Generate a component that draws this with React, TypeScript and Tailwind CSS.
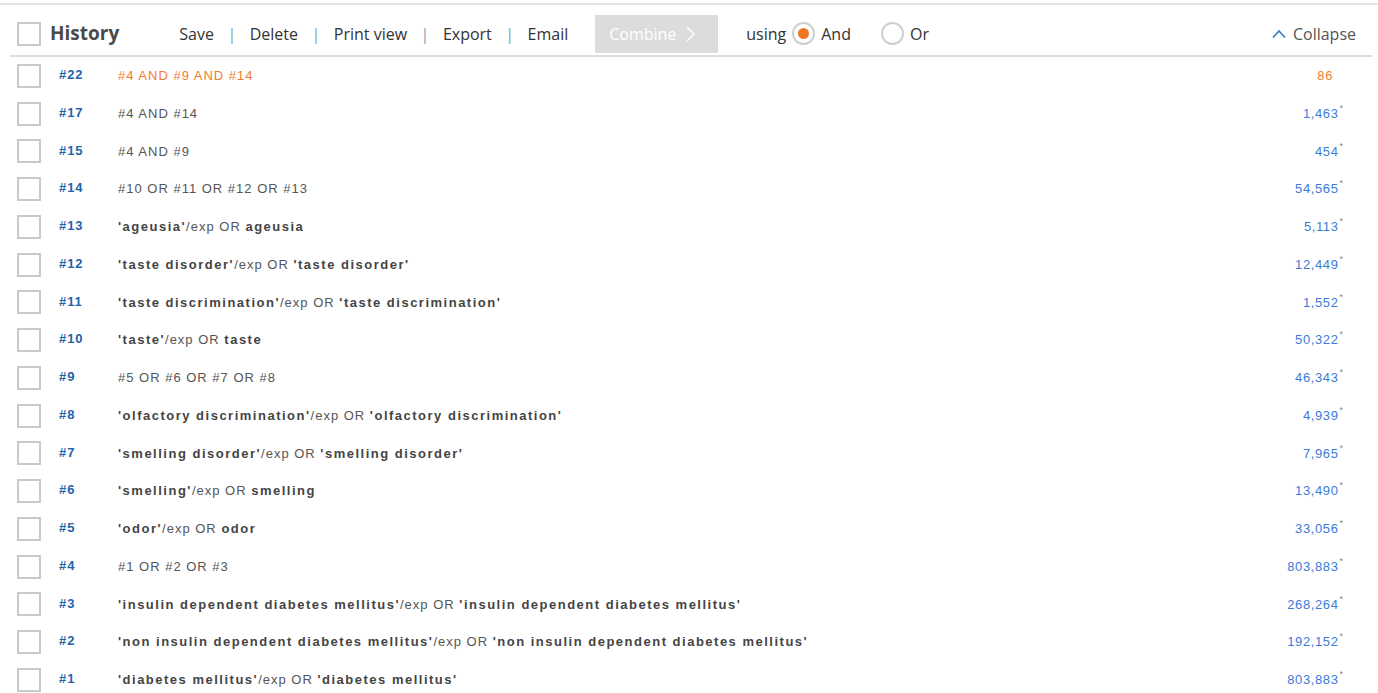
import React from 'react';

type Part = { text: string; bold?: boolean };

type HistoryRow = {
  id: number;
  query: Part[];
  count: string;
  latest?: boolean;
};

const t = (text: string): Part => ({ text });
const b = (text: string): Part => ({ text, bold: true });

const rows: HistoryRow[] = [
  { id: 22, query: [t('#4 AND #9 AND #14')], count: '86', latest: true },
  { id: 17, query: [t('#4 AND #14')], count: '1,463' },
  { id: 15, query: [t('#4 AND #9')], count: '454' },
  { id: 14, query: [t('#10 OR #11 OR #12 OR #13')], count: '54,565' },
  { id: 13, query: [b("'ageusia'"), t('/exp OR '), b('ageusia')], count: '5,113' },
  { id: 12, query: [b("'taste disorder'"), t('/exp OR '), b("'taste disorder'")], count: '12,449' },
  { id: 11, query: [b("'taste discrimination'"), t('/exp OR '), b("'taste discrimination'")], count: '1,552' },
  { id: 10, query: [b("'taste'"), t('/exp OR '), b('taste')], count: '50,322' },
  { id: 9, query: [t('#5 OR #6 OR #7 OR #8')], count: '46,343' },
  { id: 8, query: [b("'olfactory discrimination'"), t('/exp OR '), b("'olfactory discrimination'")], count: '4,939' },
  { id: 7, query: [b("'smelling disorder'"), t('/exp OR '), b("'smelling disorder'")], count: '7,965' },
  { id: 6, query: [b("'smelling'"), t('/exp OR '), b('smelling')], count: '13,490' },
  { id: 5, query: [b("'odor'"), t('/exp OR '), b('odor')], count: '33,056' },
  { id: 4, query: [t('#1 OR #2 OR #3')], count: '803,883' },
  { id: 3, query: [b("'insulin dependent diabetes mellitus'"), t('/exp OR '), b("'insulin dependent diabetes mellitus'")], count: '268,264' },
  { id: 2, query: [b("'non insulin dependent diabetes mellitus'"), t('/exp OR '), b("'non insulin dependent diabetes mellitus'")], count: '192,152' },
  { id: 1, query: [b("'diabetes mellitus'"), t('/exp OR '), b("'diabetes mellitus'")], count: '803,883' },
];

const actions = ['Save', 'Delete', 'Print view', 'Export', 'Email'];

const Checkbox: React.FC = () => (
  <span className="block w-6 h-6 border-2 border-[#c9c9c9] bg-white shrink-0" />
);

const Radio: React.FC<{ checked?: boolean; label: string }> = ({ checked, label }) => (
  <label className="flex items-center gap-[6px]">
    <span className="w-[23px] h-[23px] rounded-full border-2 border-[#cfcfcf] bg-white flex items-center justify-center">
      {checked && <span className="w-[11px] h-[11px] rounded-full bg-[#ee7623]" />}
    </span>
    <span>{label}</span>
  </label>
);

const App: React.FC = () => {
  return (
    <div className="min-h-screen bg-white pt-[3px]">
      <div className="border-t-2 border-[#e6e6e6]" />

      <div className="ml-[10px] mr-[6px] h-[52px] border-b-2 border-[#dedede] flex items-center pl-[7px] pt-[7px] font-['Open_Sans',sans-serif] text-[#333]">
        <Checkbox />
        <span className="ml-[9px] text-[19px] font-bold text-[#4a4a4a]">History</span>

        <div className="ml-[60px] flex items-center text-[16px]">
          {actions.map((a, i) => (
            <React.Fragment key={a}>
              {i > 0 && <span className="mx-[13.5px] text-[#7f9bbd]">|</span>}
              <span>{a}</span>
            </React.Fragment>
          ))}
        </div>

        <button className="ml-[27px] w-[123px] h-[38px] bg-[#dcdcdc] text-white text-[16px] flex items-center pl-[14px] gap-[10px]">
          <span>Combine</span>
          <svg width="9" height="16" viewBox="0 0 9 16" fill="none" stroke="white" strokeWidth="1.5">
            <path d="M1 1l7 7-7 7" />
          </svg>
        </button>

        <div className="ml-[28px] flex items-center gap-[8px] text-[16px]">
          <span className="mr-[-2px]">using</span>
          <Radio checked label="And" />
          <span className="w-[14px]" />
          <Radio label="Or" />
        </div>

        <div className="ml-auto mr-[16px] flex items-center gap-[7px] text-[16px] text-[#555]">
          <svg width="14" height="10" viewBox="0 0 14 10" fill="none" stroke="#3f7fc4" strokeWidth="1.8">
            <path d="M1 8.5l6-6.5 6 6.5" />
          </svg>
          <span>Collapse</span>
        </div>
      </div>

      <div className="font-['Liberation_Sans',Arial,sans-serif] text-[13px]">
        {rows.map((r) => (
          <div key={r.id} className="h-[37.75px] flex items-center pl-[17px] pr-[35px]">
            <Checkbox />
            <span className="ml-[18px] w-[59px] font-bold tracking-[0.9px] text-[#2463a8] -mt-[2px]">#{r.id}</span>
            <span className={`tracking-[1px] ${r.latest ? 'text-[#f07e2e]' : 'text-[#555]'}`}>
              {r.query.map((p, i) => (
                <span key={i} className={p.bold ? 'font-bold tracking-[1.5px] text-[#444]' : ''}>
                  {p.text}
                </span>
              ))}
            </span>
            <span className={`ml-auto tracking-[0.6px] ${r.latest ? 'text-[#f07e2e] mr-[10px]' : 'text-[#3b7bd6]'}`}>
              {r.count}
              {!r.latest && <sup className="text-[#888] text-[9px] ml-[1px] -top-[7px] tracking-normal">*</sup>}
            </span>
          </div>
        ))}
      </div>
    </div>
  );
};

export default App;
